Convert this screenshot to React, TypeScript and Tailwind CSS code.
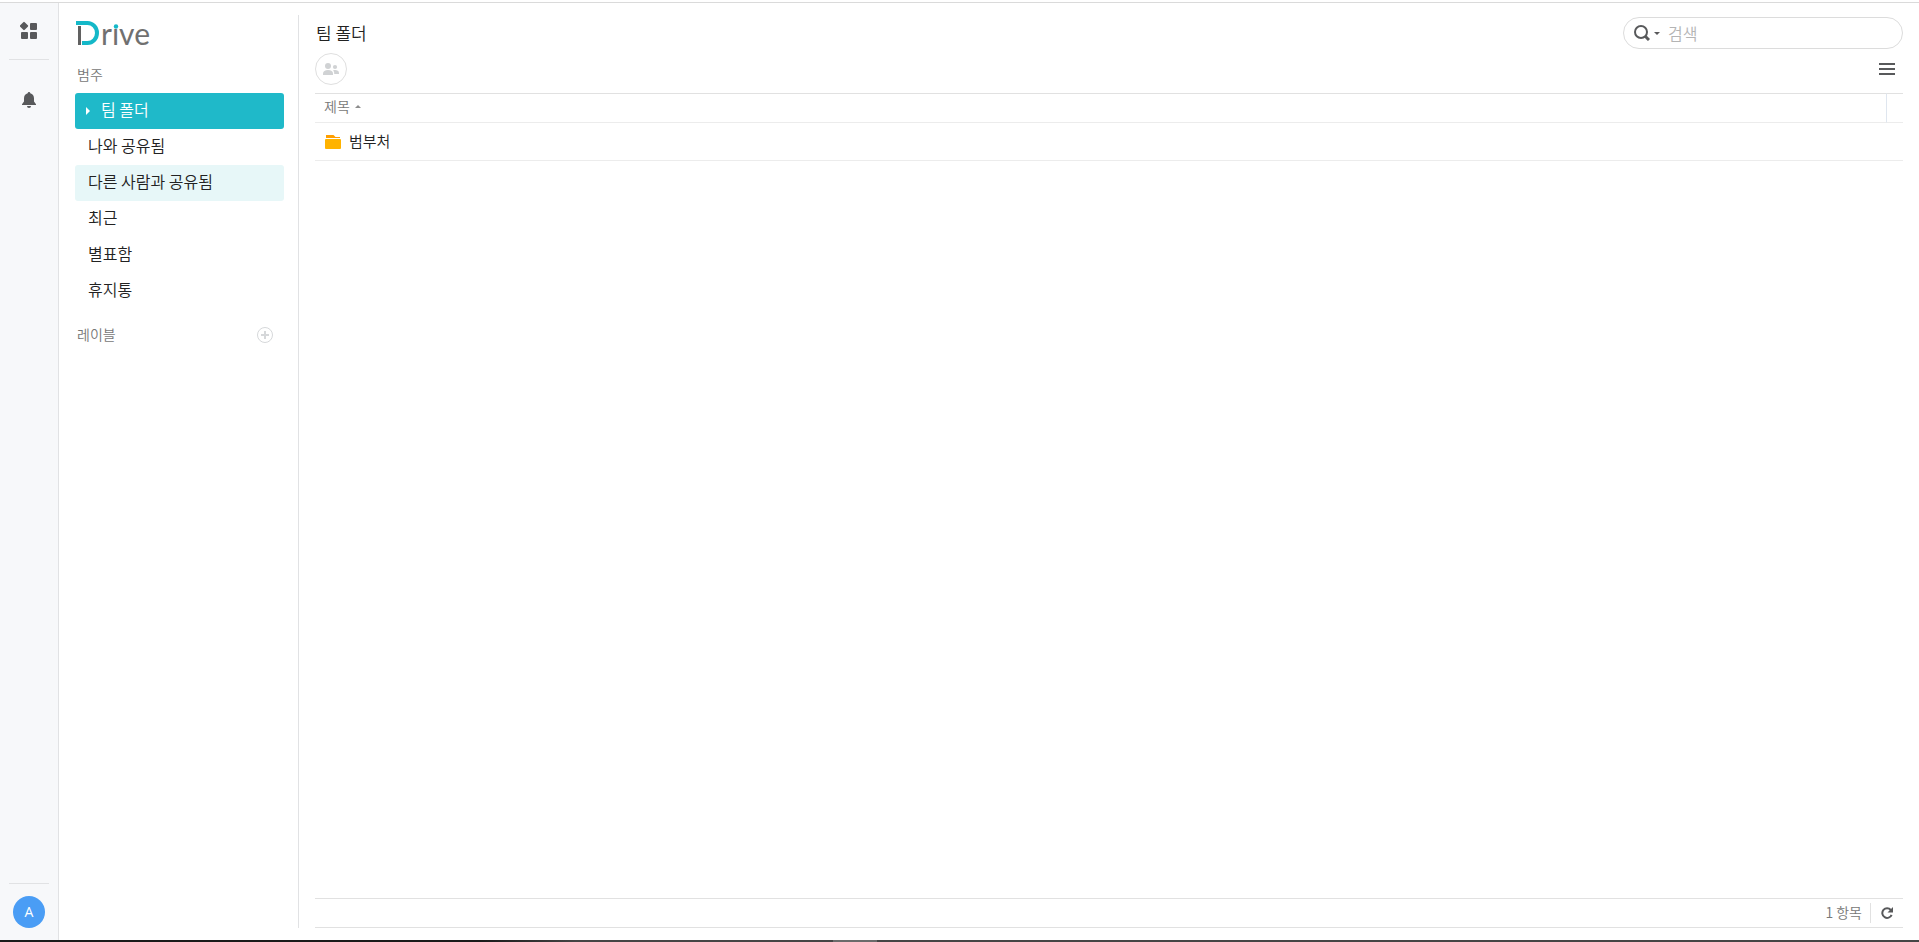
import { useState } from 'react';

const categories = ['팀 폴더', '나와 공유됨', '다른 사람과 공유됨', '최근', '별표함', '휴지통'];

const folders = [{ id: 1, name: '범부처' }];

function Logo() {
  return (
    <svg width="80" height="34" viewBox="0 0 80 34" role="img" aria-label="Drive" className="overflow-visible">
      <rect x="3" y="7" width="3" height="19" fill="#616161" />
      <path d="M1 4H12.500A9.500 10 0 0 1 12.500 24H7" fill="none" stroke="#14b8c8" strokeWidth="4" />
      <text x="26" y="26" fontSize="30" fontWeight="400" fill="#707070" style={{ fontFamily: 'Lato, sans-serif' }}>
        rive
      </text>
      <rect x="37" y="1" width="9" height="9" fill="#fff" />
      <circle cx="41" cy="7.500" r="2.200" fill="#14b8c8" />
    </svg>
  );
}

function AppsIcon() {
  return (
    <svg width="18" height="18" viewBox="0 0 18 18" fill="#58595b">
      <rect x="0.800" y="1.800" width="6.400" height="6.400" rx="1" transform="rotate(45 4 5)" />
      <rect x="10" y="2" width="7" height="7" rx="1" />
      <rect x="1" y="11" width="7" height="7" rx="1" />
      <rect x="10" y="11" width="7" height="7" rx="1" />
    </svg>
  );
}

function BellIcon() {
  return (
    <svg width="14" height="16" viewBox="0 0 14 16" fill="#58595b">
      <path d="M7 0a1.3 1.3 0 0 0-1.3 1.2C3.400 1.800 2 3.700 2 6.200V9.500L0 12.300V13H14V12.300L12 9.500V6.200C12 3.700 10.600 1.800 8.300 1.200A1.300 1.300 0 0 0 7 0Z" />
      <path d="M5 14H9A2 2 0 0 1 5 14Z" />
    </svg>
  );
}

function PeopleIcon() {
  return (
    <svg width="16" height="12" viewBox="0 0 16 12" fill="#d0d2d4">
      <circle cx="5" cy="3" r="3" />
      <circle cx="12" cy="4" r="2.100" />
      <path d="M0 12V10.500C0 8.300 2 7 5 7S10 8.300 10 10.500V12Z" />
      <path d="M11.200 11V10C11.200 8.900 10.700 8 10 7.400C12.800 6.600 16 7.400 16 10V11Z" />
    </svg>
  );
}

function FolderIcon() {
  return (
    <svg width="16" height="14" viewBox="0 0 16 14">
      <path d="M1 0H8.500L10.500 2H15V3H1Z" fill="#ff9f00" />
      <rect y="4" width="16" height="10" rx="1" fill="#ffb300" />
    </svg>
  );
}

function Rail() {
  return (
    <nav className="flex w-[59px] shrink-0 flex-col items-center border-r border-[#e1e2e4] bg-[#f7f8fa] pt-[18px] pb-3">
      <button aria-label="앱">
        <AppsIcon />
      </button>
      <hr className="mt-5 w-10 border-[#e1e2e4]" />
      <button aria-label="알림" className="mt-8">
        <BellIcon />
      </button>
      <hr className="mt-auto w-10 border-[#e1e2e4]" />
      <button className="mt-3 h-8 w-8 rounded-full bg-[#4a9df5] font-['Open_Sans',sans-serif] text-sm font-normal text-white">
        A
      </button>
    </nav>
  );
}

function Sidebar({ active, onSelect }: { active: string; onSelect: (name: string) => void }) {
  return (
    <aside className="my-3 w-60 shrink-0 border-r border-[#e1e2e4] pr-3.5 pl-4">
      <a href="#" className="mt-1 flex">
        <Logo />
      </a>
      <h2 className="mt-3 pb-0.5 pl-0.5 text-sm leading-[18px] font-[350] text-[#777]">범주</h2>
      <ul className="mt-2">
        {categories.map((name) => (
          <li key={name}>
            <button
              onClick={() => onSelect(name)}
              className={`flex h-9 w-full items-center rounded-[3px] pb-1 text-base ${
                name === active
                  ? 'bg-[#1fb9c9] pl-[11px] text-white'
                  : name === '다른 사람과 공유됨'
                    ? 'bg-[#e7f7f8] pl-[13px] text-[#222]'
                    : 'pl-[13px] text-[#222] hover:bg-[#e7f7f8]'
              }`}
            >
              {name === active && (
                <svg width="4" height="12" viewBox="0 0 4 12" fill="#fff" className="mr-[11px]">
                  <path d="M0 4L4 8L0 12Z" />
                </svg>
              )}
              {name}
            </button>
          </li>
        ))}
      </ul>
      <div className="mt-4 flex items-center justify-between pr-[11px] pl-0.5">
        <h2 className="pb-0.5 text-sm leading-[18px] font-[350] text-[#777]">레이블</h2>
        <button aria-label="레이블 추가">
          <svg width="16" height="16" viewBox="0 0 16 16" fill="none" stroke="#d6d8da">
            <circle cx="8" cy="8" r="7.500" />
            <path d="M8 4V12M4 8H12" strokeWidth="2" />
          </svg>
        </button>
      </div>
    </aside>
  );
}

function SearchBox() {
  return (
    <div className="flex h-8 w-[280px] items-center rounded-full border border-[#dcdcdc] pl-2.5">
      <button aria-label="검색 옵션" className="flex items-center gap-1">
        <svg width="16" height="16" viewBox="0 0 16 16" fill="none" stroke="#58595b">
          <circle cx="7" cy="7" r="6" strokeWidth="2" />
          <path d="M11 11L15 15" strokeWidth="3" />
        </svg>
        <svg width="6" height="3" viewBox="0 0 6 3" fill="#58595b">
          <path d="M0 0H6L3 3Z" />
        </svg>
      </button>
      <input
        type="text"
        aria-label="검색"
        placeholder="검색"
        className="ml-2 min-w-0 flex-1 text-base text-[#222] outline-none placeholder:text-[#b4b4b4]"
      />
    </div>
  );
}

export default function App() {
  const [active, setActive] = useState('팀 폴더');

  return (
    <div className="flex h-screen flex-col bg-white font-['Noto_Sans_CJK_KR',sans-serif] font-[350]">
      <div className="h-[3px] shrink-0 border-b border-[#dadada]" />
      <div className="flex min-h-0 flex-1">
        <Rail />
        <Sidebar active={active} onSelect={setActive} />
        <main className="flex min-w-0 flex-1 flex-col px-4 pt-3.5 pb-3">
          <header className="flex h-8 items-center justify-between">
            <h1 className="pl-px text-[17px] font-[350] text-[#222]">{active}</h1>
            <SearchBox />
          </header>
          <div className="mt-1 flex items-center justify-between pr-2">
            <button
              aria-label="공유"
              className="flex h-8 w-8 items-center justify-center rounded-full border border-[#dfdfdf]"
            >
              <PeopleIcon />
            </button>
            <button aria-label="메뉴">
              <svg width="16" height="12" viewBox="0 0 16 12" fill="#58595b">
                <path d="M0 0H16V2H0ZM0 5H16V7H0ZM0 10H16V12H0Z" />
              </svg>
            </button>
          </div>
          <table className="mt-2 w-full border-separate border-spacing-0">
            <thead>
              <tr>
                <th className="h-[30px] border-y border-t-[#e1e1e1] border-b-[#ececec] p-0 pb-1 pl-[9px] text-left text-sm leading-5 font-[350] text-[#777]">
                  <button className="flex items-center gap-[5px]">
                    제목
                    <svg width="6" height="3" viewBox="0 0 6 3" fill="#8c8c8c">
                      <path d="M0 3H6L3 0Z" />
                    </svg>
                  </button>
                </th>
                <td className="w-[17px] border-y border-l border-t-[#e1e1e1] border-b-[#ececec] border-l-[#dfe6ef] p-0" />
              </tr>
            </thead>
            <tbody>
              {folders.map((folder) => (
                <tr key={folder.id}>
                  <td colSpan={2} className="h-[38px] border-b border-[#ececec] p-0 pl-2.5">
                    <a href="#" className="flex items-center gap-2 text-[15px] text-[#222]">
                      <FolderIcon />
                      {folder.name}
                    </a>
                  </td>
                </tr>
              ))}
            </tbody>
          </table>
          <footer className="mt-auto flex h-[30px] shrink-0 items-center justify-end border-y border-[#e1e1e1] pr-2.5 text-sm text-[#777]">
            <span className="pb-0.5">{folders.length} 항목</span>
            <button aria-label="새로고침" className="ml-2 flex h-5 items-center border-l border-[#e1e1e1] pl-2.5">
              <svg width="12" height="12" viewBox="0 0 12 12">
                <path d="M9.800 3A4.800 4.800 0 1 0 10.600 7.800" fill="none" stroke="#58595b" strokeWidth="2" />
                <path d="M12 0V5.500H6.500Z" fill="#58595b" />
              </svg>
            </button>
          </footer>
        </main>
      </div>
      <div className="flex h-0.5 shrink-0 bg-linear-to-r from-[#1a1a1a] from-25% to-[#454545] to-30%">
        <div className="ml-[43.4%] w-11 bg-[#6b6b6b]" />
      </div>
    </div>
  );
}
